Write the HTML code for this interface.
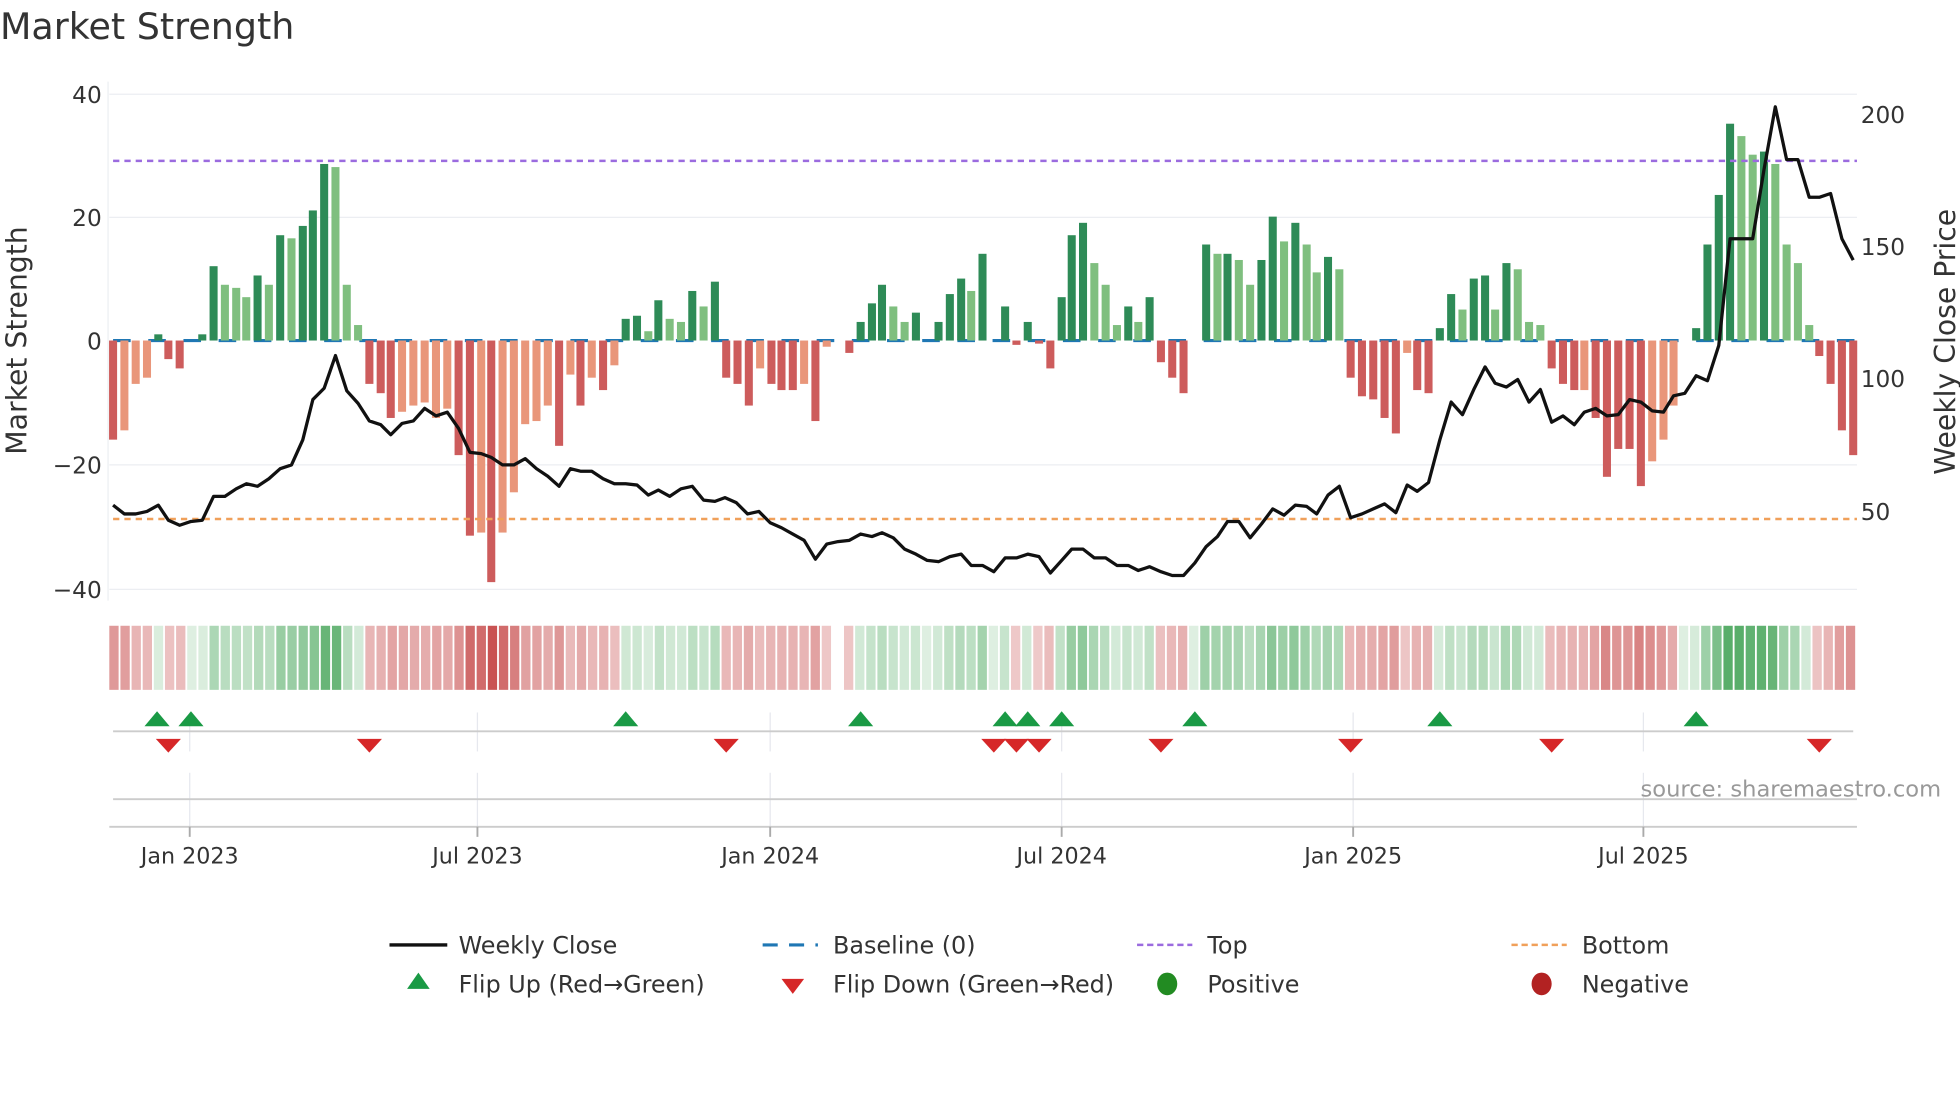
<!DOCTYPE html>
<html><head><meta charset="utf-8"><style>
html,body{margin:0;padding:0;background:#fff;width:1960px;height:1102px;overflow:hidden}
svg{display:block}
text{font-family:"DejaVu Sans","Liberation Sans",sans-serif;fill:#333}
</style></head><body>
<svg id="s" width="1960" height="1102" viewBox="0 0 1560 877" preserveAspectRatio="none" xmlns="http://www.w3.org/2000/svg">
<text x="0" y="31" font-size="29">Market Strength</text>
<g stroke="#eceef2" stroke-width="1">
<line x1="87" y1="75" x2="1478" y2="75"/><line x1="87" y1="173" x2="1478" y2="173"/>
<line x1="87" y1="370" x2="1478" y2="370"/><line x1="87" y1="469" x2="1478" y2="469"/>
<line x1="86" y1="65" x2="86" y2="478"/>
</g>
<g font-size="18.5" text-anchor="end">
<text x="81" y="82">40</text><text x="81" y="180">20</text><text x="81" y="278">0</text>
<text x="81" y="377">−20</text><text x="81" y="476">−40</text>
</g>
<g font-size="18.5">
<text x="1481" y="98">200</text><text x="1481" y="203">150</text><text x="1481" y="308">100</text><text x="1481" y="414">50</text>
</g>
<text transform="translate(21,271) rotate(-90)" font-size="22.5" text-anchor="middle">Market Strength</text>
<text transform="translate(1556,272) rotate(-90)" font-size="22.5" text-anchor="middle">Weekly Close Price</text>
<line x1="90" y1="271" x2="1478" y2="271" stroke="#1f77b4" stroke-width="2.5" stroke-dasharray="14 14"/>
<g id="bars"></g>
<line x1="90" y1="128" x2="1478" y2="128" stroke="#9b6bdf" stroke-width="2" stroke-dasharray="5 4"/>
<line x1="90" y1="413" x2="1478" y2="413" stroke="#f0a05a" stroke-width="2" stroke-dasharray="5 4"/>
<polyline id="price" fill="none" stroke="#111" stroke-width="2.6" stroke-linejoin="round"/>
<g id="heat"></g>
<g stroke="#e6e8ee" stroke-width="1">
<line x1="151" y1="567" x2="151" y2="598"/><line x1="380" y1="567" x2="380" y2="598"/><line x1="613" y1="567" x2="613" y2="598"/><line x1="845" y1="567" x2="845" y2="598"/><line x1="1077" y1="567" x2="1077" y2="598"/><line x1="1308" y1="567" x2="1308" y2="598"/>
<line x1="151" y1="615" x2="151" y2="658"/><line x1="380" y1="615" x2="380" y2="658"/><line x1="613" y1="615" x2="613" y2="658"/><line x1="845" y1="615" x2="845" y2="658"/><line x1="1077" y1="615" x2="1077" y2="658"/><line x1="1308" y1="615" x2="1308" y2="658"/>
</g>
<line x1="90" y1="582" x2="1475" y2="582" stroke="#ccc" stroke-width="1.5"/>
<line x1="90" y1="636" x2="1478" y2="636" stroke="#ccc" stroke-width="1.5"/>
<line x1="87" y1="658" x2="1478" y2="658" stroke="#ccc" stroke-width="1.5"/>
<g stroke="#aaa" stroke-width="1.5">
<line x1="151" y1="658" x2="151" y2="666"/><line x1="380" y1="658" x2="380" y2="666"/><line x1="613" y1="658" x2="613" y2="666"/><line x1="845" y1="658" x2="845" y2="666"/><line x1="1077" y1="658" x2="1077" y2="666"/><line x1="1308" y1="658" x2="1308" y2="666"/>
</g>
<g id="marks"></g>
<text x="1545" y="634" font-size="18" text-anchor="end" style="fill:#999">source: sharemaestro.com</text>
<g font-size="17.7" text-anchor="middle">
<text x="151" y="687">Jan 2023</text><text x="380" y="687">Jul 2023</text><text x="613" y="687">Jan 2024</text>
<text x="845" y="687">Jul 2024</text><text x="1077" y="687">Jan 2025</text><text x="1308" y="687">Jul 2025</text>
</g>
<g font-size="19">
<line x1="310" y1="752" x2="356" y2="752" stroke="#111" stroke-width="2.6"/><text x="365" y="759">Weekly Close</text>
<line x1="607" y1="752" x2="651" y2="752" stroke="#1f77b4" stroke-width="2.5" stroke-dasharray="12 9"/><text x="663" y="759">Baseline (0)</text>
<line x1="905" y1="752" x2="949" y2="752" stroke="#9b6bdf" stroke-width="2" stroke-dasharray="5 3"/><text x="961" y="759">Top</text>
<line x1="1203" y1="752" x2="1247" y2="752" stroke="#f0a05a" stroke-width="2" stroke-dasharray="5 3"/><text x="1259" y="759">Bottom</text>
<polygon points="333,774 342,787 324,787" fill="#1a9a45"/><text x="365" y="790">Flip Up (Red→Green)</text>
<polygon points="622,779 640,779 631,791" fill="#d62728"/><text x="663" y="790">Flip Down (Green→Red)</text>
<ellipse cx="929" cy="783" rx="8" ry="9" fill="#228b22"/><text x="961" y="790">Positive</text>
<ellipse cx="1227" cy="783" rx="8" ry="9" fill="#b22222"/><text x="1259" y="790">Negative</text>
</g>
</svg>
<script>
var B=[[90,-16,'d'],[99,-14.5,'l'],[108,-7,'l'],[117,-6,'l'],[126,1,'d'],[134,-3,'d'],[143,-4.5,'d'],[152,0,'d'],[161,1,'d'],[170,12,'d'],[179,9,'l'],[188,8.5,'l'],[196,7,'l'],[205,10.5,'d'],[214,9,'l'],[223,17,'d'],[232,16.5,'l'],[241,18.5,'d'],[249,21,'d'],[258,28.5,'d'],[267,28,'l'],[276,9,'l'],[285,2.5,'l'],[294,-7,'d'],[303,-8.5,'d'],[311,-12.5,'d'],[320,-11.5,'l'],[329,-10.5,'l'],[338,-10,'l'],[347,-12.5,'l'],[356,-11,'l'],[365,-18.5,'d'],[374,-31.5,'d'],[383,-31,'l'],[391,-39,'d'],[400,-31,'l'],[409,-24.5,'l'],[418,-13.5,'l'],[427,-13,'l'],[436,-10.5,'l'],[445,-17,'d'],[454,-5.5,'l'],[462,-10.5,'d'],[471,-6,'l'],[480,-8,'d'],[489,-4,'l'],[498,3.5,'d'],[507,4,'d'],[516,1.5,'l'],[524,6.5,'d'],[533,3.5,'l'],[542,3,'l'],[551,8,'d'],[560,5.5,'l'],[569,9.5,'d'],[578,-6,'d'],[587,-7,'d'],[596,-10.5,'d'],[605,-4.5,'l'],[614,-7,'d'],[622,-8,'d'],[631,-8,'d'],[640,-7,'l'],[649,-13,'d'],[658,-1,'l'],[676,-2,'d'],[685,3,'d'],[694,6,'d'],[702,9,'d'],[711,5.5,'l'],[720,3,'l'],[729,4.5,'d'],[747,3,'d'],[756,7.5,'d'],[765,10,'d'],[773,8,'l'],[782,14,'d'],[800,5.5,'d'],[809,-0.7,'d'],[818,3,'d'],[827,-0.5,'d'],[836,-4.5,'d'],[845,7,'d'],[853,17,'d'],[862,19,'d'],[871,12.5,'l'],[880,9,'l'],[889,2.5,'l'],[898,5.5,'d'],[906,3,'l'],[915,7,'d'],[924,-3.5,'d'],[933,-6,'d'],[942,-8.5,'d'],[960,15.5,'d'],[969,14,'l'],[977,14,'d'],[986,13,'l'],[995,9,'l'],[1004,13,'d'],[1013,20,'d'],[1022,16,'l'],[1031,19,'d'],[1040,15.5,'l'],[1048,11,'l'],[1057,13.5,'d'],[1066,11.5,'l'],[1075,-6,'d'],[1084,-9,'d'],[1093,-9.5,'d'],[1102,-12.5,'d'],[1111,-15,'d'],[1120,-2,'l'],[1128,-8,'d'],[1137,-8.5,'d'],[1146,2,'d'],[1155,7.5,'d'],[1164,5,'l'],[1173,10,'d'],[1182,10.5,'d'],[1190,5,'l'],[1199,12.5,'d'],[1208,11.5,'l'],[1217,3,'l'],[1226,2.5,'l'],[1235,-4.5,'d'],[1244,-7,'d'],[1253,-8,'d'],[1261,-8,'l'],[1270,-12.5,'d'],[1279,-22,'d'],[1288,-17.5,'d'],[1297,-17.5,'d'],[1306,-23.5,'d'],[1315,-19.5,'l'],[1324,-16,'l'],[1332,-10.5,'l'],[1350,2,'d'],[1359,15.5,'d'],[1368,23.5,'d'],[1377,35,'d'],[1386,33,'l'],[1395,30,'l'],[1404,30.5,'d'],[1413,28.5,'l'],[1422,15.5,'l'],[1431,12.5,'l'],[1440,2.5,'l'],[1448,-2.5,'d'],[1457,-7,'d'],[1466,-14.5,'d'],[1475,-18.5,'d']];
var NS="http://www.w3.org/2000/svg";
function el(t,a,p){var e=document.createElementNS(NS,t);for(var k in a)e.setAttribute(k,a[k]);p.appendChild(e);return e;}
var g=document.getElementById('bars'),h=document.getElementById('heat');
B.forEach(function(b){var v=b[1],y0=271,y1=271-v*4.93;var c=v>=0?(b[2]=='d'?'#2e8b57':'#7fbf7f'):(b[2]=='d'?'#cd5c5c':'#e9967a');
if(Math.abs(v)>0.05)el('rect',{x:b[0]-3.2,y:Math.min(y0,y1),width:6.4,height:Math.abs(y1-y0),fill:c},g);});
var hx=[];for(var x=87;x<1478;x+=8.86)hx.push(x);
hx.forEach(function(x){if(x>661&&x<668)return;var best=null,bd=99;B.forEach(function(b){var d=Math.abs(b[0]-x-4);if(d<bd){bd=d;best=b;}});
var v=best?best[1]:0;if(bd>6)v=0;var a=Math.min(1,0.2+Math.abs(v)/40);var col=v>=0?'rgba(60,160,80,'+a*0.85+')':'rgba(200,80,80,'+(0.3+Math.abs(v)/40*0.7)+')';
el('rect',{x:x,y:498,width:7.4,height:51,fill:col},h);});
var P="90,402 99,409 108,409 117,407 126,402 134,414 143,418 152,415 161,414 170,395 179,395 188,389 196,385 205,387 214,381 223,373 232,370 241,350 249,318 258,309 267,283 276,311 285,321 294,335 303,338 311,346 320,337 329,335 338,325 347,331 356,328 365,341 374,360 383,361 391,364 400,370 409,370 418,365 427,373 436,379 445,387 454,373 462,375 471,375 480,381 489,385 498,385 507,386 516,394 524,390 533,395 542,389 551,387 560,398 569,399 577,396 586,400 595,409 604,407 613,416 622,420 631,425 640,430 649,445 658,433 667,431 676,430 685,425 694,427 702,424 711,428 720,437 729,441 738,446 747,447 756,443 765,441 773,450 782,450 791,455 800,444 809,444 818,441 827,443 836,456 845,446 853,437 862,437 871,444 880,444 889,450 898,450 906,454 915,451 924,455 933,458 942,458 951,448 960,435 969,427 977,415 986,415 995,428 1004,417 1013,405 1022,410 1031,402 1040,403 1048,409 1057,394 1066,387 1075,412 1084,409 1093,405 1102,401 1111,408 1120,386 1128,391 1137,384 1146,350 1155,320 1164,330 1173,310 1182,292 1190,305 1199,308 1208,302 1217,320 1226,310 1235,336 1244,331 1253,338 1261,328 1270,325 1279,331 1288,330 1297,318 1306,320 1315,327 1324,328 1332,315 1341,313 1350,299 1359,303 1368,275 1377,190 1386,190 1395,190 1404,135 1413,85 1422,127 1431,127 1440,157 1448,157 1457,154 1466,190 1475,207";
document.getElementById('price').setAttribute('points',P);
var m=document.getElementById('marks');
[125,152,498,685,800,818,845,951,1146,1350].forEach(function(x){el('polygon',{points:(x)+',566 '+(x+10)+',578 '+(x-10)+',578',fill:'#1a9a45'},m);});
[134,294,578,791,809,827,924,1075,1235,1448].forEach(function(x){el('polygon',{points:(x-10)+',588 '+(x+10)+',588 '+x+',599',fill:'#d62728'},m);});
</script>
</body></html>
